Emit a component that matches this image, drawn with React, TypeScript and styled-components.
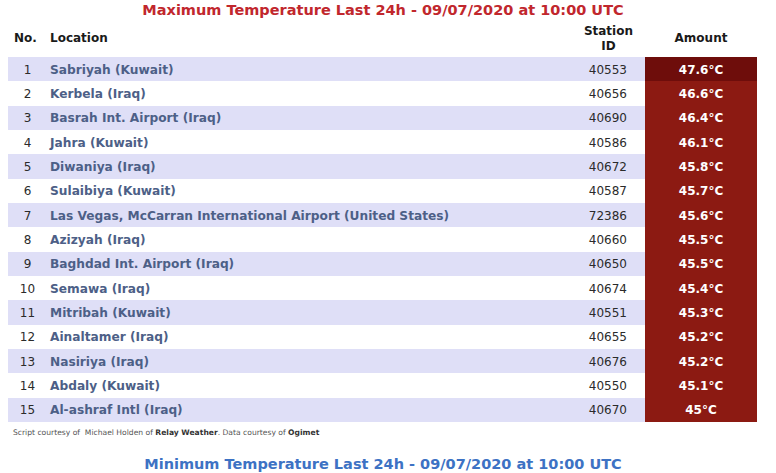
import React from "react";
import styled, { createGlobalStyle } from "styled-components";

const Global = createGlobalStyle`
  body {
    margin: 0 8px;
    background: #ffffff;
    font-family: "DejaVu Sans", Verdana, sans-serif;
  }
`;

const Title = styled.div<{ $tone: "max" | "min" }>`
  text-align: center;
  font-size: 14.5px;
  font-weight: bold;
  line-height: 20px;
  height: 20px;
  padding-right: 10px;
  color: ${(p) => (p.$tone === "max" ? "#c1272d" : "#3d72c4")};
`;

const Table = styled.table`
  border-collapse: collapse;
  width: 749px;
  table-layout: fixed;
`;

const HeadCell = styled.th<{ $align?: string; $padL?: number; $padR?: number }>`
  font-size: 12px;
  font-weight: bold;
  color: #1a1a1a;
  line-height: 15px;
  height: 37px;
  padding: 0 ${(p) => p.$padR || 0}px 0 ${(p) => p.$padL || 0}px;
  text-align: ${(p) => p.$align || "left"};
  vertical-align: middle;
`;

const Stacked = styled.div`
  display: inline-block;
  text-align: center;
`;

const Row = styled.tr<{ $shade: boolean }>`
  background: ${(p) => (p.$shade ? "#dfdff7" : "#ffffff")};
  height: 24.33px;
`;

const NumCell = styled.td`
  font-size: 12px;
  color: #2b2b2b;
  text-align: center;
  padding: 1px 0 0 4px;
`;

const LocCell = styled.td`
  font-size: 12.2px;
  font-weight: bold;
  color: #4d5f87;
  padding: 1px 0 0 7px;
  white-space: nowrap;
`;

const IdCell = styled.td`
  font-size: 12px;
  color: #2b2b2b;
  text-align: right;
  padding: 1px 18px 0 0;
`;

const AmountCell = styled.td<{ $dark: boolean }>`
  font-size: 12px;
  font-weight: bold;
  color: #ffffff;
  text-align: center;
  padding: 1px 0 0 0;
  background: ${(p) => (p.$dark ? "#6e0d0b" : "#8c1a12")};
`;

const Credits = styled.div`
  font-size: 7.6px;
  color: #555555;
  padding: 6px 0 0 5px;
  height: 24px;
  box-sizing: border-box;
  b {
    color: #333333;
  }
`;

const Gap = styled.div`
  height: 8px;
`;

const rows: [string, string, string][] = [
  ["Sabriyah (Kuwait)", "40553", "47.6°C"],
  ["Kerbela (Iraq)", "40656", "46.6°C"],
  ["Basrah Int. Airport (Iraq)", "40690", "46.4°C"],
  ["Jahra (Kuwait)", "40586", "46.1°C"],
  ["Diwaniya (Iraq)", "40672", "45.8°C"],
  ["Sulaibiya (Kuwait)", "40587", "45.7°C"],
  ["Las Vegas, McCarran International Airport (United States)", "72386", "45.6°C"],
  ["Azizyah (Iraq)", "40660", "45.5°C"],
  ["Baghdad Int. Airport (Iraq)", "40650", "45.5°C"],
  ["Semawa (Iraq)", "40674", "45.4°C"],
  ["Mitribah (Kuwait)", "40551", "45.3°C"],
  ["Ainaltamer (Iraq)", "40655", "45.2°C"],
  ["Nasiriya (Iraq)", "40676", "45.2°C"],
  ["Abdaly (Kuwait)", "40550", "45.1°C"],
  ["Al-ashraf Intl (Iraq)", "40670", "45°C"],
];

export default function App() {
  return (
    <>
      <Global />
      <Title $tone="max">Maximum Temperature Last 24h - 09/07/2020 at 10:00 UTC</Title>
      <Table>
        <colgroup>
          <col style={{ width: 35 }} />
          <col style={{ width: 500 }} />
          <col style={{ width: 102 }} />
          <col style={{ width: 112 }} />
        </colgroup>
        <thead>
          <tr>
            <HeadCell $align="center">No.</HeadCell>
            <HeadCell $padL={7}>Location</HeadCell>
            <HeadCell $align="right" $padR={12}>
              <Stacked>
                Station
                <br />
                ID
              </Stacked>
            </HeadCell>
            <HeadCell $align="center">Amount</HeadCell>
          </tr>
        </thead>
        <tbody>
          {rows.map(([loc, id, amt], i) => (
            <Row key={i} $shade={i % 2 === 0}>
              <NumCell>{i + 1}</NumCell>
              <LocCell>{loc}</LocCell>
              <IdCell>{id}</IdCell>
              <AmountCell $dark={i === 0}>{amt}</AmountCell>
            </Row>
          ))}
        </tbody>
      </Table>
      <Credits>
        Script courtesy of&nbsp; Michael Holden of <b>Relay Weather</b>. Data courtesy of <b>Ogimet</b>
      </Credits>
      <Gap />
      <Title $tone="min">Minimum Temperature Last 24h - 09/07/2020 at 10:00 UTC</Title>
    </>
  );
}
